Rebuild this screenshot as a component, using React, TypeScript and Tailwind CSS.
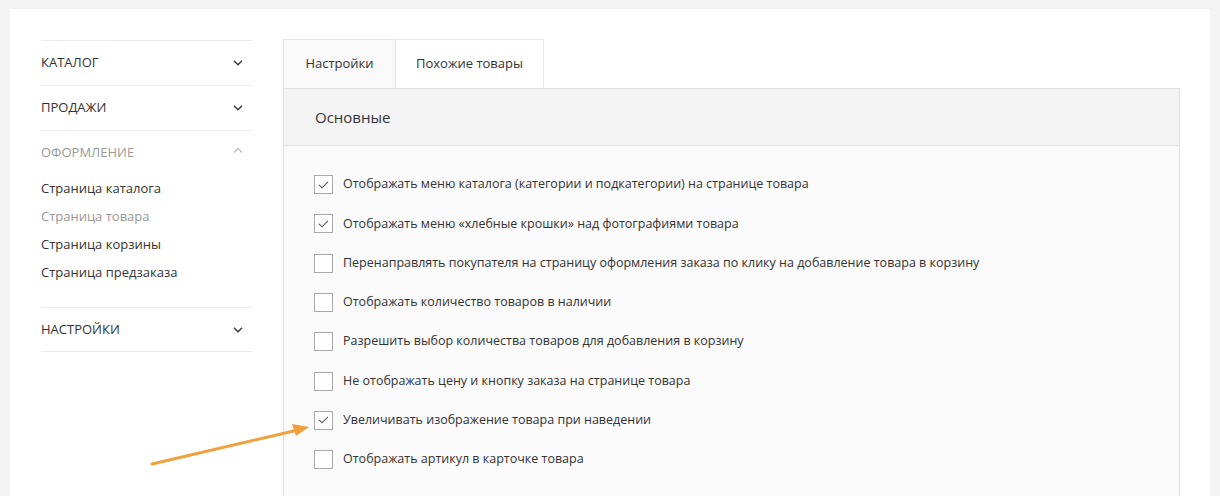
import React from "react";

const Chevron = ({ up = false, color = "#333" }: { up?: boolean; color?: string }) => (
  <svg width="10" height="6" viewBox="0 0 10 6" fill="none">
    <path d={up ? "M1 5.5L5 1.5L9 5.5" : "M1 0.8L5 4.8L9 0.8"} stroke={color} strokeWidth="1.3" />
  </svg>
);

const Checkbox = ({ checked }: { checked: boolean }) => (
  <div className="w-[19px] h-[19px] border border-[#a9a9a9] bg-white flex items-center justify-center shrink-0">
    {checked && (
      <svg width="11" height="8" viewBox="0 0 11 8" fill="none">
        <path d="M1 3.8L4 6.8L10 0.8" stroke="#555" strokeWidth="1.1" />
      </svg>
    )}
  </div>
);

const options: [string, boolean][] = [
  ["Отображать меню каталога (категории и подкатегории) на странице товара", true],
  ["Отображать меню «хлебные крошки» над фотографиями товара", true],
  ["Перенаправлять покупателя на страницу оформления заказа по клику на добавление товара в корзину", false],
  ["Отображать количество товаров в наличии", false],
  ["Разрешить выбор количества товаров для добавления в корзину", false],
  ["Не отображать цену и кнопку заказа на странице товара", false],
  ["Увеличивать изображение товара при наведении", true],
  ["Отображать артикул в карточке товара", false],
];

export default function App() {
  return (
    <div
      className="w-[1220px] h-[496px] bg-[#f3f3f3] pt-[9px] pl-[10px] overflow-hidden relative"
      style={{ fontFamily: '"Open Sans", sans-serif' }}
    >
      <div className="w-[1200px] h-[600px] bg-white flex pt-[31px] pl-[31px]">
        {/* Sidebar */}
        <div className="w-[211px] shrink-0 text-[#333]">
          <div className="border-t border-[#ececec]">
            <div className="h-[45px] flex items-center justify-between pr-[9px] border-b border-[#ececec] text-[13px] uppercase">
              <span>Каталог</span>
              <Chevron />
            </div>
            <div className="h-[45px] flex items-center justify-between pr-[9px] border-b border-[#ececec] text-[13px] uppercase">
              <span>Продажи</span>
              <Chevron />
            </div>
            <div className="h-[44px] flex items-center justify-between pr-[9px] text-[13px] uppercase text-[#999]">
              <span>Оформление</span>
              <div className="-mt-[6px]">
                <Chevron up color="#bbb" />
              </div>
            </div>
            <div className="flex flex-col text-[13px] pb-[20px]">
              <div className="h-[28px] flex items-center">Страница каталога</div>
              <div className="h-[28px] flex items-center text-[#999]">Страница товара</div>
              <div className="h-[28px] flex items-center">Страница корзины</div>
              <div className="h-[28px] flex items-center">Страница предзаказа</div>
            </div>
            <div className="h-[45px] flex items-center justify-between pr-[9px] border-t border-b border-[#ececec] text-[13px] uppercase">
              <span>Настройки</span>
              <Chevron />
            </div>
          </div>
        </div>

        {/* Main */}
        <div className="ml-[31px] w-[897px] -mt-[1px]">
          <div className="flex">
            <div className="w-[113px] h-[49px] border border-[#e4e4e4] border-b-0 bg-[#f9f9f9] flex items-center justify-center text-[13px] text-[#333]">
              Настройки
            </div>
            <div className="w-[148px] h-[49px] border border-[#ebebeb] border-l-0 border-b-0 bg-white flex items-center justify-center text-[13px] text-[#333]">
              Похожие товары
            </div>
          </div>
          <div className="border border-[#e0e0e0] bg-[#fafafa]">
            <div className="h-[57px] bg-[#f4f4f4] border-b border-[#e2e2e2] flex items-center pl-[31px] text-[15px] text-[#333]">
              Основные
            </div>
            <div className="pl-[30px] pt-[19px] pb-[30px] flex flex-col">
              {options.map(([label, checked], i) => (
                <div key={i} className="h-[39.3px] flex items-center gap-[10px]">
                  <Checkbox checked={checked} />
                  <span className="text-[12.5px] text-[#333]">{label}</span>
                </div>
              ))}
            </div>
          </div>
        </div>
      </div>

      {/* Annotation arrow */}
      <svg className="absolute left-0 top-0 pointer-events-none" width="1220" height="496">
        <line x1="152" y1="464" x2="298" y2="430" stroke="#f0a03c" strokeWidth="3" strokeLinecap="round" />
        <polygon points="309,427 292,424 296,436" fill="#f0a03c" />
      </svg>
    </div>
  );
}
